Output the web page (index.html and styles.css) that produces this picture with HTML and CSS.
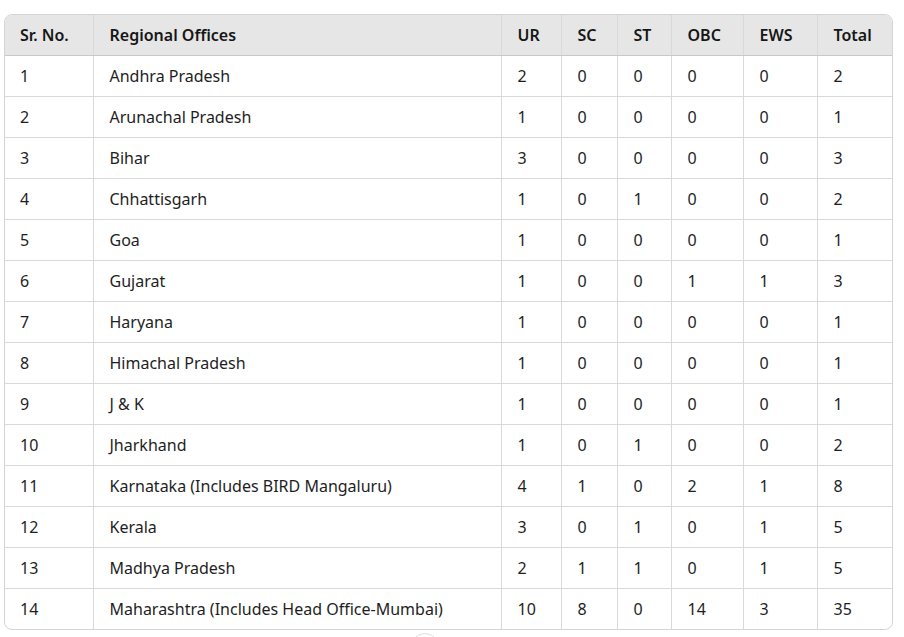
FILE: index.html
```html
<!DOCTYPE html>
<html>
<head>
<meta charset="utf-8">
<link rel="stylesheet" href="styles.css">
</head>
<body>
<div class="table-wrap">
<table class="posts">
<colgroup>
<col class="c-sr"><col class="c-office"><col class="c-ur"><col class="c-sc"><col class="c-st"><col class="c-obc"><col class="c-ews"><col class="c-total">
</colgroup>
<thead>
<tr><th>Sr. No.</th><th>Regional Offices</th><th>UR</th><th>SC</th><th>ST</th><th>OBC</th><th>EWS</th><th>Total</th></tr>
</thead>
<tbody>
<tr><td>1</td><td>Andhra Pradesh</td><td>2</td><td>0</td><td>0</td><td>0</td><td>0</td><td>2</td></tr>
<tr><td>2</td><td>Arunachal Pradesh</td><td>1</td><td>0</td><td>0</td><td>0</td><td>0</td><td>1</td></tr>
<tr><td>3</td><td>Bihar</td><td>3</td><td>0</td><td>0</td><td>0</td><td>0</td><td>3</td></tr>
<tr><td>4</td><td>Chhattisgarh</td><td>1</td><td>0</td><td>1</td><td>0</td><td>0</td><td>2</td></tr>
<tr><td>5</td><td>Goa</td><td>1</td><td>0</td><td>0</td><td>0</td><td>0</td><td>1</td></tr>
<tr><td>6</td><td>Gujarat</td><td>1</td><td>0</td><td>0</td><td>1</td><td>1</td><td>3</td></tr>
<tr><td>7</td><td>Haryana</td><td>1</td><td>0</td><td>0</td><td>0</td><td>0</td><td>1</td></tr>
<tr><td>8</td><td>Himachal Pradesh</td><td>1</td><td>0</td><td>0</td><td>0</td><td>0</td><td>1</td></tr>
<tr><td>9</td><td>J &amp; K</td><td>1</td><td>0</td><td>0</td><td>0</td><td>0</td><td>1</td></tr>
<tr><td>10</td><td>Jharkhand</td><td>1</td><td>0</td><td>1</td><td>0</td><td>0</td><td>2</td></tr>
<tr><td>11</td><td>Karnataka (Includes BIRD Mangaluru)</td><td>4</td><td>1</td><td>0</td><td>2</td><td>1</td><td>8</td></tr>
<tr><td>12</td><td>Kerala</td><td>3</td><td>0</td><td>1</td><td>0</td><td>1</td><td>5</td></tr>
<tr><td>13</td><td>Madhya Pradesh</td><td>2</td><td>1</td><td>1</td><td>0</td><td>1</td><td>5</td></tr>
<tr><td>14</td><td>Maharashtra (Includes Head Office-Mumbai)</td><td>10</td><td>8</td><td>0</td><td>14</td><td>3</td><td>35</td></tr>
</tbody>
</table>
</div>
<div class="scroll-btn"></div>
</body>
</html>
```
FILE: styles.css
```css
html, body {
  margin: 0;
  padding: 0;
  background: #ffffff;
}
body {
  padding: 14px 4px 0 4px;
  font-family: "Noto Sans", "Open Sans", "DejaVu Sans", sans-serif;
  font-size: 16px;
  color: #1e1e1e;
  position: relative;
  height: 623px;
  overflow: hidden;
}
.table-wrap {
  width: 887px;
  border: 1px solid #d4d4d4;
  border-radius: 8px;
  overflow: hidden;
}
.posts {
  width: 100%;
  border-collapse: collapse;
  table-layout: fixed;
}
.c-sr { width: 88px; }
.c-office { width: 408px; }
.c-ur { width: 60px; }
.c-sc { width: 56px; }
.c-st { width: 54px; }
.c-obc { width: 72px; }
.c-ews { width: 74px; }
.c-total { width: 75px; }
.posts th,
.posts td {
  height: 40px;
  padding: 0 0 0 15px;
  text-align: left;
  vertical-align: middle;
  border-right: 1px solid #d9d9d9;
  border-bottom: 1px solid #d9d9d9;
  white-space: nowrap;
}
.posts th {
  background: #e6e6e6;
  font-weight: 600;
  color: #161616;
  border-bottom-color: #c8c8c8;
}
.posts th:nth-child(n+2),
.posts td:nth-child(n+2) {
  padding-left: 16px;
}
.posts th:last-child,
.posts td:last-child {
  border-right: none;
}
.posts tbody tr:last-child td {
  border-bottom: none;
}
.scroll-btn {
  position: absolute;
  left: 411px;
  top: 633px;
  width: 26px;
  height: 26px;
  border: 1px solid #dedede;
  border-radius: 50%;
  background: #ffffff;
}
```
